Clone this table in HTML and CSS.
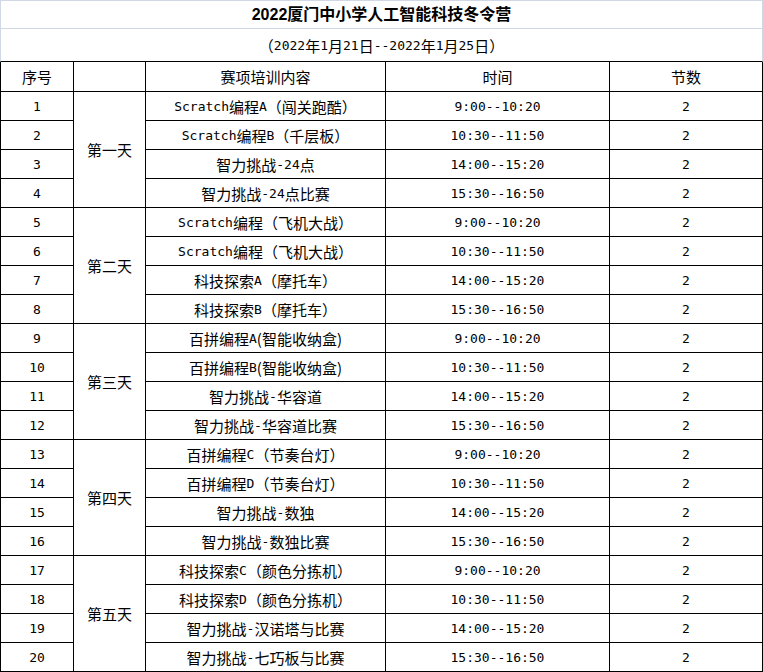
FILE: index.html
```html
<!DOCTYPE html>
<html lang="zh-CN">
<head>
<meta charset="utf-8">
<title>2022厦门中小学人工智能科技冬令营</title>
<link rel="stylesheet" href="styles.css">
</head>
<body>
<div class="sheet">
  <div class="cell title">2022厦门中小学人工智能科技冬令营</div>
  <div class="cell sub">（<span class="en">2022</span>年<span class="en">1</span>月<span class="en">21</span>日<span class="en">--2022</span>年<span class="en">1</span>月<span class="en">25</span>日）</div>

  <div class="cell first">序号</div>
  <div class="cell"></div>
  <div class="cell">赛项培训内容</div>
  <div class="cell">时间</div>
  <div class="cell">节数</div>

  <div class="cell first en">1</div>
  <div class="cell day">第一天</div>
  <div class="cell"><span class="en">Scratch</span>编程<span class="en">A</span>（闯关跑酷）</div>
  <div class="cell en">9:00--10:20</div>
  <div class="cell en">2</div>

  <div class="cell first en">2</div>
  <div class="cell"><span class="en">Scratch</span>编程<span class="en">B</span>（千层板）</div>
  <div class="cell en">10:30--11:50</div>
  <div class="cell en">2</div>

  <div class="cell first en">3</div>
  <div class="cell">智力挑战<span class="en">-24</span>点</div>
  <div class="cell en">14:00--15:20</div>
  <div class="cell en">2</div>

  <div class="cell first en">4</div>
  <div class="cell">智力挑战<span class="en">-24</span>点比赛</div>
  <div class="cell en">15:30--16:50</div>
  <div class="cell en">2</div>

  <div class="cell first en">5</div>
  <div class="cell day">第二天</div>
  <div class="cell"><span class="en">Scratch</span>编程（飞机大战）</div>
  <div class="cell en">9:00--10:20</div>
  <div class="cell en">2</div>

  <div class="cell first en">6</div>
  <div class="cell"><span class="en">Scratch</span>编程（飞机大战）</div>
  <div class="cell en">10:30--11:50</div>
  <div class="cell en">2</div>

  <div class="cell first en">7</div>
  <div class="cell">科技探索<span class="en">A</span>（摩托车）</div>
  <div class="cell en">14:00--15:20</div>
  <div class="cell en">2</div>

  <div class="cell first en">8</div>
  <div class="cell">科技探索<span class="en">B</span>（摩托车）</div>
  <div class="cell en">15:30--16:50</div>
  <div class="cell en">2</div>

  <div class="cell first en">9</div>
  <div class="cell day">第三天</div>
  <div class="cell">百拼编程<span class="en">A</span>(智能收纳盒)</div>
  <div class="cell en">9:00--10:20</div>
  <div class="cell en">2</div>

  <div class="cell first en">10</div>
  <div class="cell">百拼编程<span class="en">B</span>(智能收纳盒)</div>
  <div class="cell en">10:30--11:50</div>
  <div class="cell en">2</div>

  <div class="cell first en">11</div>
  <div class="cell">智力挑战<span class="en">-</span>华容道</div>
  <div class="cell en">14:00--15:20</div>
  <div class="cell en">2</div>

  <div class="cell first en">12</div>
  <div class="cell">智力挑战<span class="en">-</span>华容道比赛</div>
  <div class="cell en">15:30--16:50</div>
  <div class="cell en">2</div>

  <div class="cell first en">13</div>
  <div class="cell day">第四天</div>
  <div class="cell">百拼编程<span class="en">C</span>（节奏台灯）</div>
  <div class="cell en">9:00--10:20</div>
  <div class="cell en">2</div>

  <div class="cell first en">14</div>
  <div class="cell">百拼编程<span class="en">D</span>（节奏台灯）</div>
  <div class="cell en">10:30--11:50</div>
  <div class="cell en">2</div>

  <div class="cell first en">15</div>
  <div class="cell">智力挑战<span class="en">-</span>数独</div>
  <div class="cell en">14:00--15:20</div>
  <div class="cell en">2</div>

  <div class="cell first en">16</div>
  <div class="cell">智力挑战<span class="en">-</span>数独比赛</div>
  <div class="cell en">15:30--16:50</div>
  <div class="cell en">2</div>

  <div class="cell first en">17</div>
  <div class="cell day">第五天</div>
  <div class="cell">科技探索<span class="en">C</span>（颜色分拣机）</div>
  <div class="cell en">9:00--10:20</div>
  <div class="cell en">2</div>

  <div class="cell first en">18</div>
  <div class="cell">科技探索<span class="en">D</span>（颜色分拣机）</div>
  <div class="cell en">10:30--11:50</div>
  <div class="cell en">2</div>

  <div class="cell first en">19</div>
  <div class="cell">智力挑战<span class="en">-</span>汉诺塔与比赛</div>
  <div class="cell en">14:00--15:20</div>
  <div class="cell en">2</div>

  <div class="cell first en">20</div>
  <div class="cell">智力挑战<span class="en">-</span>七巧板与比赛</div>
  <div class="cell en">15:30--16:50</div>
  <div class="cell en">2</div>
</div>
</body>
</html>
```

FILE: styles.css
```css
html, body {
  margin: 0;
  padding: 0;
  background: #ffffff;
}

.sheet {
  display: grid;
  grid-template-columns: 74px 72px 240px 224px 153px;
  grid-template-rows: 29px 33px 30px repeat(20, 29px);
  width: 763px;
  font-family: "Noto Sans CJK SC", sans-serif;
  font-size: 15px;
  color: #000000;
}

.cell {
  box-sizing: border-box;
  display: flex;
  align-items: center;
  justify-content: center;
  white-space: nowrap;
  border-right: 1px solid #000000;
  border-bottom: 1px solid #000000;
  line-height: 1;
}

.first {
  border-left: 1px solid #000000;
}

.title {
  grid-column: 1 / -1;
  border: 1px solid #d0d7e5;
  font-family: "Liberation Sans", "Noto Sans CJK SC", sans-serif;
  font-weight: bold;
  font-size: 16px;
}

.sub {
  grid-column: 1 / -1;
  border-left: 1px solid #d0d7e5;
  border-right: 1px solid #d0d7e5;
  border-bottom: 1px solid #000000;
}

.day {
  grid-row: span 4;
}

.en {
  font-family: "DejaVu Sans Mono", monospace;
  font-size: 13px;
}
```
